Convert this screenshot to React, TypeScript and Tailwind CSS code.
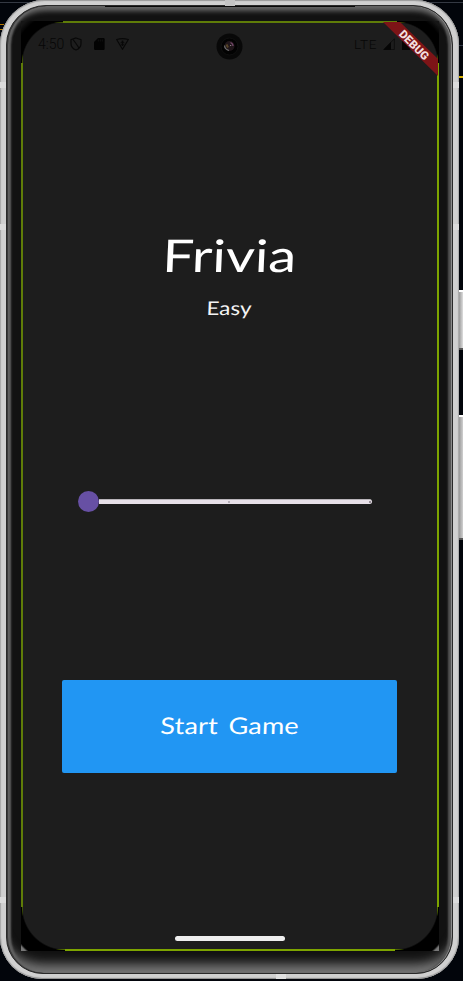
import React from "react";

function ShieldIcon() {
  return (
    <svg className="h-[14px] w-[12px]" viewBox="0 0 12 14" fill="none" stroke="#080808" strokeWidth="1.2">
      <path d="M6 1 11 2.7V6.5C11 9.3 9 11.9 6 13 3 11.9 1 9.3 1 6.5V2.7Z" />
      <path d="M3 2.5 6 6.5 9 11" />
    </svg>
  );
}

function CardIcon() {
  return (
    <svg className="h-[12px] w-[11px]" viewBox="0 0 11 12" fill="#030303">
      <path d="M4 0H9.5Q10.6 0 10.6 1.2V10.8Q10.6 12 9.5 12H1.2Q0 12 0 10.8V4Z" />
      <path d="M4.3 1.5v2M6.3 1.5v2M8.3 1.5v2" stroke="#1a1a1a" strokeWidth=".6" />
    </svg>
  );
}

function TriangleIcon() {
  return (
    <svg className="h-[12px] w-[13px]" viewBox="0 0 13 12" fill="none" stroke="#080808">
      <path d="M.7 1.6Q6.5-.4 12.3 1.6L6.5 11.3Z" strokeWidth="1.1" />
      <path d="M4.6 4.8h3.8M4.8 6.8h3.4M6.5 3v5" strokeWidth="1" />
      <circle cx="6.5" cy="3.4" r="1" fill="#080808" stroke="none" />
    </svg>
  );
}

function StatusBar() {
  return (
    <div className="flex h-[43px] items-center pb-[2px] pl-[15px] text-[#070707]">
      <span className="w-[27px] text-[14px] leading-[14px] font-light">4:50</span>
      <span className="ml-[5px] flex"><ShieldIcon /></span>
      <span className="ml-[12px] flex"><CardIcon /></span>
      <span className="ml-[11px] flex"><TriangleIcon /></span>
      <span className="ml-[225px] w-[25px] text-[13.5px] leading-[14px] font-light tracking-[0.7px]">LTE</span>
      <svg className="ml-[4px] h-[12px] w-[12px]" viewBox="0 0 12 12">
        <path d="M.8 11.5H11.4V.8Z" fill="none" stroke="#0b0b0b" strokeWidth=".8" />
        <path d="M.3 11.7H8V4Z" fill="#050505" />
      </svg>
      <svg className="ml-[7px] h-[13px] w-[8px]" viewBox="0 0 8 13">
        <path d="M0 1.5h2V0h4v1.5h2V13H0Z" fill="#050505" />
      </svg>
    </div>
  );
}

function DifficultySlider() {
  return (
    <div className="ml-[55px] flex h-[21px] w-[294px] items-center">
      <div className="h-[21px] w-[21px] rounded-full bg-[#6750a4]" />
      <div className="flex h-[5px] flex-1 items-center justify-end rounded-r-full border-t border-[#b8b4b9] bg-[#e7e0e8]">
        <span className="mr-[139px] h-[2px] w-[2px] rounded-full bg-[#a39da6]" />
        <span className="mr-px h-[2px] w-[2px] rounded-full bg-[#777079]" />
      </div>
    </div>
  );
}

function DebugBanner() {
  return (
    <div className="absolute top-0 right-0 h-[56px] w-[56px]">
      <svg className="h-[56px] w-[56px]" viewBox="0 0 56 56">
        <path d="M0 1H17L55 38V55Z" fill="#7d1417" />
      </svg>
      <span className="absolute top-[17.5px] left-[11px] w-[40px] rotate-45 text-center text-[11.5px] leading-[12px] font-black text-[#f3dfdf]">
        DEBUG
      </span>
    </div>
  );
}

function Camera() {
  return (
    <svg className="absolute top-[12px] left-[195px] h-[27px] w-[27px]" viewBox="0 0 27 27">
      <circle cx="13.5" cy="13.5" r="13" fill="#080808" />
      <circle cx="13.5" cy="13.5" r="8.5" fill="#020202" stroke="#101010" />
      <circle cx="13.5" cy="13" r="5" fill="#20161a" />
      <path d="M8.5 12.5q.3 4 4.5 5" stroke="#6c6c6c" strokeWidth="1.2" fill="none" />
      <path d="M10.5 11.5l1.5 3" stroke="#574527" strokeWidth="2" />
      <path d="M14.5 9.5q2.5 1 2.5 3.5" stroke="#6f4466" strokeWidth="1.3" fill="none" />
      <circle cx="14.7" cy="12.5" r=".6" fill="#b3a5ac" />
    </svg>
  );
}

function Screen() {
  return (
    <div className="relative h-[930px] w-[418px] overflow-hidden bg-black">
      <div className="flex h-full flex-col overflow-hidden border-2 border-t-[#5f7d08] border-r-[#7da400] border-b-[#7da400] border-l-[#5f7d08] bg-[#1d1d1d]">
        <StatusBar />
        <div className="mt-[161px] flex h-[56px] items-center justify-center text-white">
          <h1 className="origin-center scale-x-[1.25] -skew-x-2 font-[Lato] text-[45px] leading-[56px] font-normal">Frivia</h1>
        </div>
        <div className="mt-[11px] flex h-[28px] items-center justify-center pr-[2px] text-[#f4f4f4]">
          <p className="scale-x-[1.18] -skew-x-2 font-[Lato] text-[19px] leading-[28px]">Easy</p>
        </div>
        <div className="mt-[169px]"><DifficultySlider /></div>
        <button className="mt-[168px] ml-[39px] flex h-[93px] w-[335px] items-center justify-center rounded-[2px] bg-[#2196f3] pb-[4px] text-white">
          <span className="scale-x-[1.18] -skew-x-2 font-[Lato] text-[23px] leading-[30px] tracking-[0.1px] [word-spacing:3px]">Start Game</span>
        </button>
        <div className="mt-[163px] ml-[151.5px] h-[5px] w-[110px] rounded-full bg-[#eeeeee]" />
      </div>
      <div className="absolute top-0 left-0 h-[42px] w-[42px] bg-[radial-gradient(circle_at_100%_100%,transparent_40px,#000_41.5px,#000_50px,#161616_56px)]" />
      <div className="absolute top-0 right-0 h-[42px] w-[42px] bg-[radial-gradient(circle_at_0%_100%,transparent_40px,#000_41.5px,#000_50px,#161616_56px)]" />
      <div className="absolute bottom-0 left-0 h-[44px] w-[44px] bg-[radial-gradient(circle_at_100%_0%,transparent_42px,#000_43.5px,#000_57px,#777_59px)]" />
      <div className="absolute right-0 bottom-0 h-[44px] w-[44px] bg-[radial-gradient(circle_at_0%_0%,transparent_42px,#000_43.5px,#000_57px,#777_59px)]" />
      <Camera />
      <DebugBanner />
    </div>
  );
}

export default function App() {
  return (
    <div className="relative flex h-[981px] w-[463px] overflow-hidden bg-[#02050b] font-[Roboto,sans-serif]">
      <div className="absolute top-[2px] left-0 h-px w-full bg-[#343943]" />
      <div className="absolute top-[24px] left-0 h-[6px] w-[4px] border-y border-[#b87900]" />
      <div className="absolute top-[76px] right-0 h-[2px] w-[4px] bg-[#d6af00]" />
      <div className="absolute top-[45px] right-0 h-px w-[4px] bg-[#303846]" />
      <div className="relative h-[979px] w-[459px] shrink-0 rounded-[45px] rounded-b-[42px] bg-[#d0d0d0] pt-[5px] pr-[6px] pb-[5px] pl-[6px] shadow-[inset_0_1px_1px_#999,inset_1px_0_1px_#aaa,inset_-1px_0_1px_#aaa,inset_0_-1px_1px_#888]">
        <div className="h-full rounded-[40px] rounded-b-[37px] border border-[#292929] bg-[#121212] pt-[15px] pl-[14px] shadow-[inset_1px_0_0_#3a3a3a,inset_-1px_0_0_#8b8b8b,inset_0_9px_5px_-4px_#676767,inset_5px_0_2px_-1px_#606060,inset_-5px_0_2px_-1px_#555555,inset_0_-18px_11px_-9px_#777777]">
          <Screen />
        </div>
        <div className="absolute top-[6px] left-[105px] h-px w-[250px] bg-[#090909]" />
        <div className="absolute top-0 left-[225px] h-[6px] w-[10px] bg-[#c4c4c4]" />
        <div className="absolute top-[82px] left-0 h-[6px] w-[6px] bg-[#dcdcdc]" />
        <div className="absolute top-[82px] right-0 h-[6px] w-[6px] bg-[#dcdcdc]" />
        <div className="absolute top-[224px] left-0 h-[6px] w-[6px] bg-[#dcdcdc]" />
        <div className="absolute top-[224px] right-0 h-[6px] w-[6px] bg-[#dcdcdc]" />
        <div className="absolute top-[897px] left-0 h-[6px] w-[6px] bg-[#dcdcdc]" />
        <div className="absolute top-[897px] right-0 h-[6px] w-[6px] bg-[#dcdcdc]" />
        <div className="absolute bottom-0 left-[276px] h-[5px] w-[10px] bg-[#e0e0e0]" />
      </div>
      <div className="flex w-[4px] flex-col pt-[290px]">
        <div className="h-[60px] border-t-2 border-b-2 border-t-white border-b-[#555555] bg-gradient-to-r from-[#999999] to-[#dedede]" />
        <div className="mt-[65px] h-[125px] border-t-2 border-b-2 border-t-white border-b-[#555555] bg-gradient-to-r from-[#999999] to-[#d0d0d0]" />
      </div>
    </div>
  );
}
